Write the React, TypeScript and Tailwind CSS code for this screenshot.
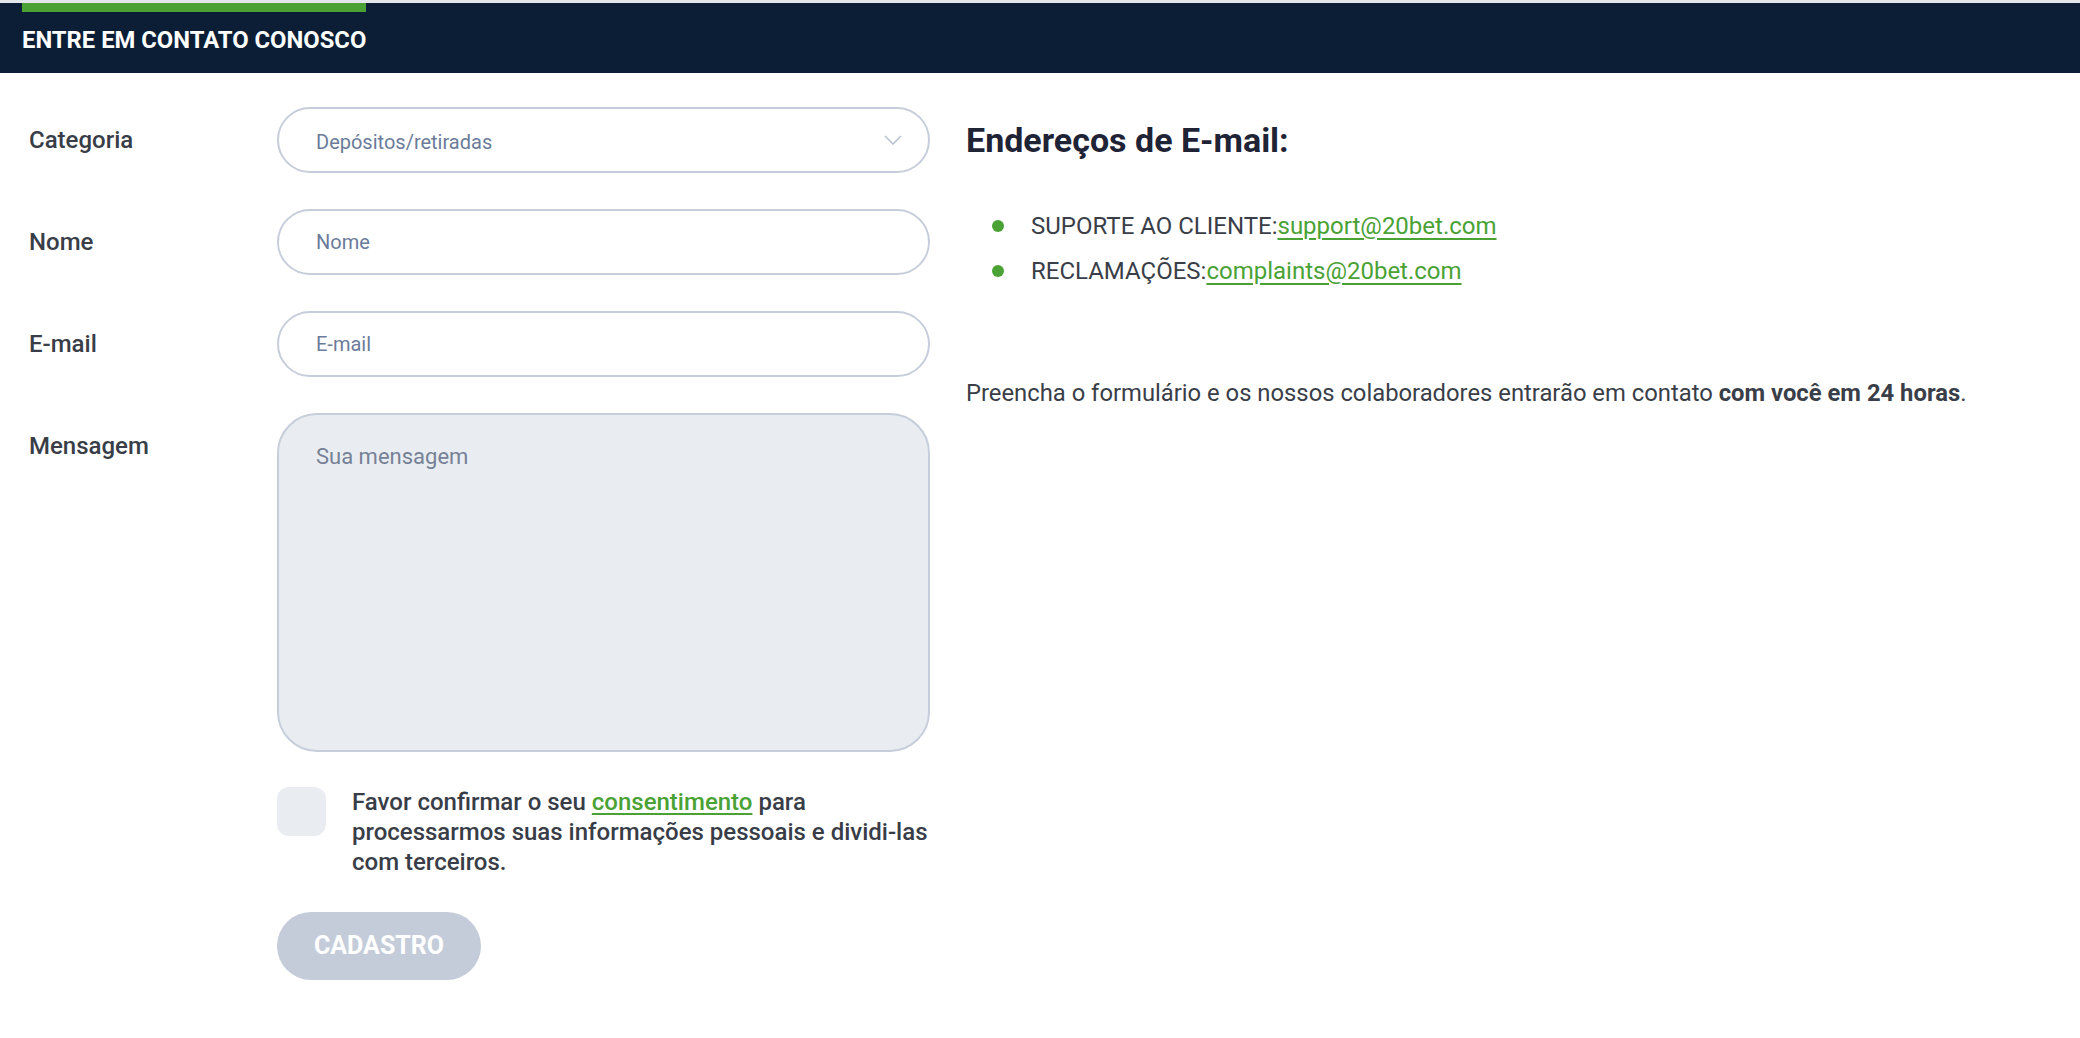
import { useState } from 'react';

const FIELD =
  'h-[66px] w-[653px] rounded-full border-2 border-[#c6cedb] bg-white pl-[37px] pr-6 text-[20px] text-[#3a3f4a] outline-none placeholder:text-[#6b7b9a]';

function FieldRow({ label, children }: { label: string; children: React.ReactNode }) {
  return (
    <div className="flex items-start">
      <div className="flex h-[66px] w-[248px] shrink-0 items-center text-[24px] font-medium text-[#383d47]">
        {label}
      </div>
      {children}
    </div>
  );
}

export default function App() {
  const [agree, setAgree] = useState(false);

  return (
    <div className="min-h-screen bg-white font-['Roboto',sans-serif]">
      {/* top strip + header */}
      <div className="h-[3px] bg-[#e3e7ec]" />
      <div className="relative flex h-[70px] items-center bg-[#0c1e36] px-[22px] pt-[6px]">
        <div className="absolute left-[22px] top-0 h-[9px] w-[344px] bg-[#4aa235]" />
        <h1 className="text-[23.8px] font-bold text-white">ENTRE EM CONTATO CONOSCO</h1>
      </div>

      <div className="flex gap-[36px] pl-[29px] pt-[34px]">
        {/* form */}
        <div className="flex flex-col gap-[36px]">
          <FieldRow label="Categoria">
            <div className="flex h-[66px] w-[653px] items-center justify-between rounded-full border-2 border-[#c6cedb] pl-[37px] pr-[26px]">
              <span className="pt-[4px] text-[20px] text-[#6b7b9a]">Depósitos/retiradas</span>
              <svg width="18" height="10" viewBox="0 0 18 10" fill="none">
                <path d="M1 1 L9 9 L17 1" stroke="#b9c3d2" strokeWidth="1.6" />
              </svg>
            </div>
          </FieldRow>
          <FieldRow label="Nome">
            <input className={FIELD} placeholder="Nome" />
          </FieldRow>
          <FieldRow label="E-mail">
            <input className={FIELD} placeholder="E-mail" />
          </FieldRow>
          <FieldRow label="Mensagem">
            <textarea
              className="h-[339px] w-[653px] resize-none rounded-[40px] border-2 border-[#c6cedb] bg-[#e9edf1] px-[37px] pt-[27px] text-[22px] leading-[30px] text-[#3a3f4a] outline-none placeholder:text-[#768196]"
              placeholder="Sua mensagem"
            />
          </FieldRow>

          <div className="ml-[248px] flex flex-col gap-[35px]">
            <div className="-mt-px flex items-start gap-[26px]">
              <button
                type="button"
                onClick={() => setAgree((a) => !a)}
                className="h-[49px] w-[49px] shrink-0 rounded-[12px] bg-[#e9edf1]"
              >
                {agree && <span className="text-[#4aa235]">✓</span>}
              </button>
              <p className="w-[578px] text-[24px] font-medium leading-[30px] text-[#383d47]">
                Favor confirmar o seu{' '}
                <a href="#" className="text-[#4aa235] underline decoration-2 underline-offset-[3px]">
                  consentimento
                </a>{' '}
                para processarmos suas informações pessoais e dividi-las com terceiros.
              </p>
            </div>
            <button
              type="button"
              className="h-[68px] w-[204px] rounded-full bg-[#c4ccd9] text-[25px] font-bold text-white"
            >
              CADASTRO
            </button>
          </div>
        </div>

        {/* right column */}
        <div className="flex flex-col">
          <h2 className="flex h-[66px] items-center text-[34px] font-bold text-[#1f2336]">
            Endereços de E-mail:
          </h2>
          <ul className="mt-[30px] pl-[26px] text-[24px] text-[#3a3e48]">
            <li className="flex h-[45px] items-center">
              <span className="mr-[27px] h-[12px] w-[12px] rounded-full bg-[#4aa235]" />
              SUPORTE AO CLIENTE:
              <a href="#" className="text-[#4aa235] underline decoration-2 underline-offset-[4px]">
                support@20bet.com
              </a>
            </li>
            <li className="flex h-[45px] items-center">
              <span className="mr-[27px] h-[12px] w-[12px] rounded-full bg-[#4aa235]" />
              RECLAMAÇÕES:
              <a href="#" className="text-[#4aa235] underline decoration-2 underline-offset-[4px]">
                complaints@20bet.com
              </a>
            </li>
          </ul>
          <p className="mt-[85px] text-[23.8px] leading-[30px] text-[#3a3e48]">
            Preencha o formulário e os nossos colaboradores entrarão em contato{' '}
            <strong className="font-bold">com você em 24 horas</strong>.
          </p>
        </div>
      </div>
    </div>
  );
}
